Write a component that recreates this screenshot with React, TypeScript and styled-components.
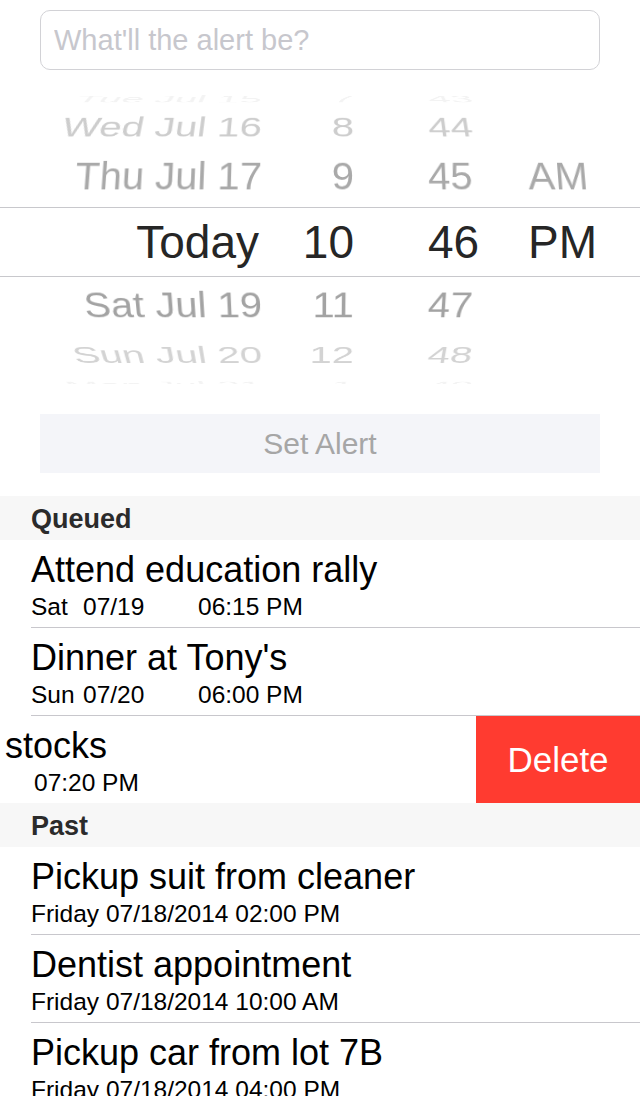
import React from "react";
import styled, { createGlobalStyle } from "styled-components";

const Global = createGlobalStyle`
  html, body { margin: 0; padding: 0; background: #fff; }
  body { font-family: "Liberation Sans", Arial, Helvetica, sans-serif; }
  * { box-sizing: border-box; }
`;

const Screen = styled.div`
  width: 640px;
  height: 1096px;
  overflow: hidden;
  background: #fff;
`;

const InputWrap = styled.div`
  padding: 10px 40px 0;
`;

const AlertInput = styled.input`
  display: block;
  width: 100%;
  height: 60px;
  border: 1px solid #d2d2d6;
  border-radius: 10px;
  padding: 0 13px;
  font-family: "Liberation Sans", Arial, sans-serif;
  font-size: 29px;
  color: #000;
  outline: none;
  background: #fff;
  &::placeholder {
    color: #c7c7cd;
  }
`;

const Picker = styled.div`
  margin-top: 24px;
  height: 290px;
  overflow: hidden;
`;

const WheelRow = styled.div<{ $h: number; $tilt: number; $size: number; $color: string }>`
  height: ${(p) => p.$h}px;
  line-height: ${(p) => p.$h}px;
  display: grid;
  grid-template-columns: 262px 92px 174px 1fr;
  font-size: ${(p) => p.$size}px;
  color: ${(p) => p.$color};
  white-space: nowrap;
  transform: perspective(1000px) rotateX(${(p) => p.$tilt}deg);
`;

const Band = styled.div`
  margin-top: 4px;
  height: 70px;
  line-height: 68px;
  border-top: 1px solid #c8c8cc;
  border-bottom: 1px solid #c8c8cc;
  display: grid;
  grid-template-columns: 259px 95px 174px 1fr;
  font-size: 46px;
  color: #262626;
  white-space: nowrap;
`;

const DateCell = styled.div`
  text-align: right;
`;
const HourCell = styled.div`
  text-align: right;
`;
const MinCell = styled.div`
  padding-left: 74px;
`;
const MerCell = styled.div``;

const SetButton = styled.button`
  display: flex;
  align-items: center;
  justify-content: center;
  margin: 30px 40px 0;
  width: 560px;
  height: 59px;
  border: none;
  background: #f4f5f9;
  color: #a6a6a6;
  font-family: "Liberation Sans", Arial, sans-serif;
  font-size: 30px;
  padding: 0;
`;

const SectionHeader = styled.div<{ $gap: number }>`
  margin-top: ${(p) => p.$gap}px;
  height: 44px;
  line-height: 46px;
  background: #f7f7f7;
  padding-left: 31px;
  font-size: 27px;
  font-weight: 700;
  color: #2b2b2b;
`;

const Cell = styled.div`
  padding-left: 31px;
  background: #fff;
`;

const CellBody = styled.div<{ $sep: boolean }>`
  height: ${(p) => (p.$sep ? 88 : 87)}px;
  padding-top: 10px;
  border-bottom: ${(p) => (p.$sep ? "1px solid #c8c7cc" : "none")};
`;

const Title = styled.div`
  font-size: 36px;
  line-height: 40px;
  color: #000;
  white-space: nowrap;
`;

const Sub = styled.div`
  display: flex;
  font-size: 24.5px;
  line-height: 34px;
  color: #000;
  white-space: nowrap;
`;

const SubDay = styled.span`
  flex: 0 0 52px;
`;
const SubDate = styled.span`
  flex: 0 0 115px;
`;

const SwipeRow = styled.div`
  display: flex;
  height: 87px;
  overflow: hidden;
`;

const SwipeContent = styled.div`
  flex: 0 0 640px;
  margin-left: -164px;
`;

const DeleteAction = styled.div`
  flex: 0 0 164px;
  display: flex;
  align-items: center;
  justify-content: center;
  background: #ff3b30;
  color: #fff;
  font-size: 35px;
`;

type Wheel = { h: number; tilt: number; size: number; color: string; d: string; hr: string; m: string; mer?: string };

const above: Wheel[] = [
  { h: 10, tilt: 76, size: 40, color: "#f3f3f3", d: "Tue Jul 15", hr: "7", m: "43" },
  { h: 46, tilt: 48, size: 40, color: "#cdcdcd", d: "Wed Jul 16", hr: "8", m: "44" },
  { h: 53, tilt: 18, size: 40, color: "#a9a9a9", d: "Thu Jul 17", hr: "9", m: "45", mer: "AM" },
];

const below: Wheel[] = [
  { h: 56, tilt: -28, size: 40, color: "#a3a3a3", d: "Sat Jul 19", hr: "11", m: "47" },
  { h: 44, tilt: -55, size: 40, color: "#d3d3d3", d: "Sun Jul 20", hr: "12", m: "48" },
  { h: 16, tilt: -76, size: 40, color: "#f3f3f3", d: "Mon Jul 21", hr: "1", m: "49" },
];

const WheelLine = ({ w }: { w: Wheel }) => (
  <WheelRow $h={w.h} $tilt={w.tilt} $size={w.size} $color={w.color}>
    <DateCell>{w.d}</DateCell>
    <HourCell>{w.hr}</HourCell>
    <MinCell>{w.m}</MinCell>
    <MerCell>{w.mer ?? ""}</MerCell>
  </WheelRow>
);

type Item = { title: string; day?: string; date?: string; time: string; full?: string };

const queued: Item[] = [
  { title: "Attend education rally", day: "Sat", date: "07/19", time: "06:15 PM" },
  { title: "Dinner at Tony's", day: "Sun", date: "07/20", time: "06:00 PM" },
];

const past: Item[] = [
  { title: "Pickup suit from cleaner", full: "Friday 07/18/2014 02:00 PM", time: "" },
  { title: "Dentist appointment", full: "Friday 07/18/2014 10:00 AM", time: "" },
  { title: "Pickup car from lot 7B", full: "Friday 07/18/2014 04:00 PM", time: "" },
];

const QueuedSub = ({ it }: { it: Item }) => (
  <Sub>
    <SubDay>{it.day}</SubDay>
    <SubDate>{it.date}</SubDate>
    <span>{it.time}</span>
  </Sub>
);

export default function App() {
  return (
    <Screen>
      <Global />
      <InputWrap>
        <AlertInput placeholder="What'll the alert be?" />
      </InputWrap>

      <Picker>
        {above.map((w) => (
          <WheelLine key={w.d} w={w} />
        ))}
        <Band>
          <DateCell>Today</DateCell>
          <HourCell>10</HourCell>
          <MinCell>46</MinCell>
          <MerCell>PM</MerCell>
        </Band>
        {below.map((w) => (
          <WheelLine key={w.d} w={w} />
        ))}
      </Picker>

      <SetButton>Set Alert</SetButton>

      <SectionHeader $gap={23}>Queued</SectionHeader>
      {queued.map((it) => (
        <Cell key={it.title}>
          <CellBody $sep>
            <Title>{it.title}</Title>
            <QueuedSub it={it} />
          </CellBody>
        </Cell>
      ))}
      <SwipeRow>
        <SwipeContent>
          <Cell>
            <CellBody $sep={false}>
              <Title>Analyze stocks</Title>
              <QueuedSub it={{ title: "Analyze stocks", day: "Mon", date: "07/21", time: "07:20 PM" }} />
            </CellBody>
          </Cell>
        </SwipeContent>
        <DeleteAction>Delete</DeleteAction>
      </SwipeRow>

      <SectionHeader $gap={0}>Past</SectionHeader>
      {past.map((it) => (
        <Cell key={it.title}>
          <CellBody $sep>
            <Title>{it.title}</Title>
            <Sub>{it.full}</Sub>
          </CellBody>
        </Cell>
      ))}
    </Screen>
  );
}
